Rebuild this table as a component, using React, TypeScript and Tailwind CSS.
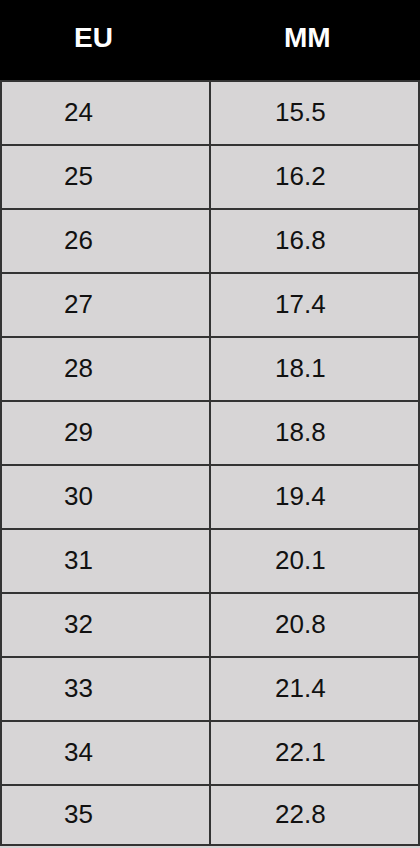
const rows: [string, string][] = [
  ["24", "15.5"],
  ["25", "16.2"],
  ["26", "16.8"],
  ["27", "17.4"],
  ["28", "18.1"],
  ["29", "18.8"],
  ["30", "19.4"],
  ["31", "20.1"],
  ["32", "20.8"],
  ["33", "21.4"],
  ["34", "22.1"],
  ["35", "22.8"],
];

export default function App() {
  return (
    <div className="w-[420px] h-[848px] overflow-hidden bg-[#d7d5d6] font-['Liberation_Sans',Arial,sans-serif]">
      {/* header */}
      <div className="flex h-20 bg-black text-white font-bold text-[28px] pb-[5px]">
        <div className="w-[209px] flex items-center pl-[74px]">EU</div>
        <div className="flex-1 flex items-center pl-[75px]">MM</div>
      </div>

      {rows.map(([eu, mm], i) => (
        <div
          key={eu}
          className={
            "flex border-t-2 border-[#333333] text-[26px] text-[#111111] " +
            (i === rows.length - 1 ? "h-[62px] border-b-2" : "h-16")
          }
        >
          <div className="w-[209px] border-l-2 border-[#333333] flex items-center pl-[62px] pb-[3px] leading-none">
            {eu}
          </div>
          <div className="flex-1 border-x-2 border-[#333333] flex items-center pl-[64px] pb-[3px] leading-none">
            {mm}
          </div>
        </div>
      ))}
    </div>
  );
}
